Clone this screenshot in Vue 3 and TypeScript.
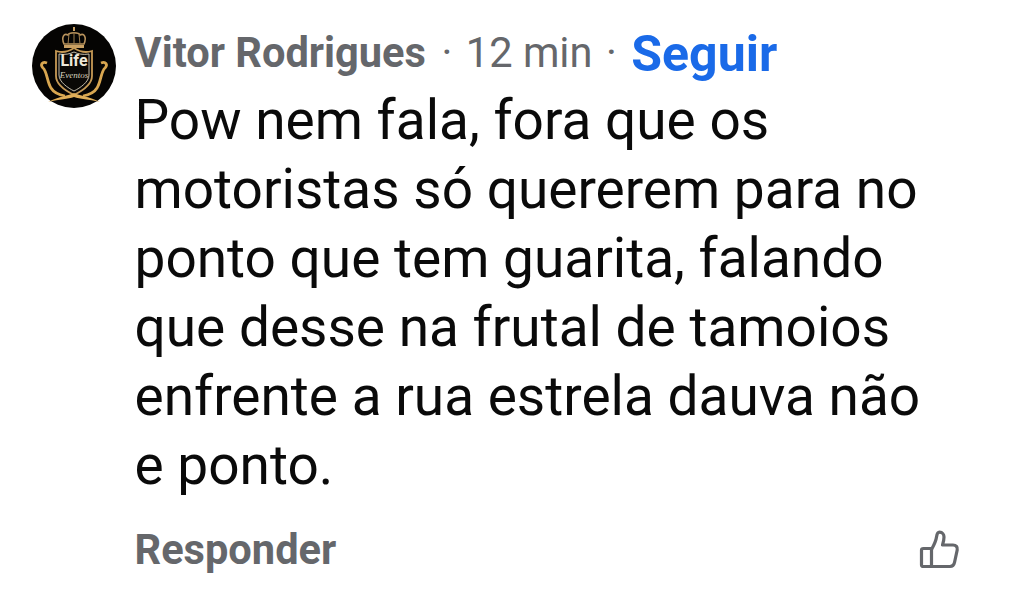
<script setup lang="ts">
const lines: string[] = [
  'Pow nem fala, fora que os',
  'motoristas só quererem para no',
  'ponto que tem guarita, falando',
  'que desse na frutal de tamoios',
  'enfrente a rua estrela dauva não',
  'e ponto.',
]
</script>

<template>
  <main class="comment">
    <div class="avatar">
      <svg viewBox="0 0 84 84" width="84" height="84">
        <circle cx="42" cy="42" r="42" fill="#050403" />
        <path d="M42 3v4" stroke="#c9a063" stroke-width="2" />
        <path d="M32 20 C29 13 32 9 36 11 C37 8 47 8 48 11 C52 9 55 13 52 20 Z" fill="none" stroke="#b8925c" stroke-width="1.6" />
        <path d="M42 8 V20 M37 10 L36 20 M47 10 L48 20" stroke="#9c7c4e" stroke-width="1" />
        <path d="M32 21 H52 V24 H32 Z" fill="#c9a063" />
        <path d="M24 27 C30 29 36 28 42 24 C48 28 54 29 60 27 L60 52 C60 60 50 67 42 71 C34 67 24 60 24 52 Z" fill="#0a0806" stroke="#c79a55" stroke-width="1.8" />
        <path d="M27 30 C33 31 38 30 42 28 C46 30 51 31 57 30 V51 C57 58 48 64 42 67 C36 64 27 58 27 51 Z" fill="none" stroke="#d8d0bc" stroke-width="0.9" />
        <path d="M15 39 C10 37 8 41 11 44 C15 47 15 58 19 64 C22 69 28 71 33 72 M69 39 C74 37 76 41 73 44 C69 47 69 58 65 64 C62 69 56 71 51 72" fill="none" stroke="#d8a650" stroke-width="2.8" />
        <path d="M16 78 C28 72 36 72 42 69 C48 72 56 72 68 78 C56 75 48 75 42 73 C36 75 28 75 16 78Z" fill="#e0ae58" />
      </svg>
      <span class="life">Life</span>
      <span class="eventos">Eventos</span>
    </div>
    <section class="body">
      <header class="meta">
        <strong class="name">Vitor Rodrigues</strong>
        <span class="dot first">·</span>
        <span class="time">12 min</span>
        <span class="dot second">·</span>
        <strong class="follow">Seguir</strong>
      </header>
      <p class="text">
        <span v-for="line in lines" :key="line" class="line">{{ line }}</span>
      </p>
      <footer class="actions">
        <strong class="reply">Responder</strong>
        <svg class="like" viewBox="0 0 42 42" width="42" height="42" fill="none" stroke="#65676b" stroke-width="3.2" stroke-linejoin="round" stroke-linecap="round">
          <path d="M3.5 21 C3.5 20 4.2 19.5 5.5 19.5 H13.5 V37.5 H5.5 C4.2 37.5 3.5 37 3.5 36 Z" />
          <path d="M13.5 20.5 C16 16 18 12 18.5 8 C19 4.5 20 3.2 21.5 3.2 C24.5 3.2 26 5.5 26 8 C26 11 25.5 13 24.5 16 H35 C38 16 39.8 18 39.2 21 L36.5 33.5 C36 36 34.5 37.5 32 37.5 H13.5" />
        </svg>
      </footer>
    </section>
  </main>
</template>

<style>
html, body { background: #fff; }
</style>

<style scoped>
.comment {
  width: 1024px;
  height: 601px;
  box-sizing: border-box;
  padding: 24px 64px 0 32px;
  display: flex;
  gap: 18.5px;
  font-family: Roboto, "Liberation Sans", sans-serif;
  background: #fff;
  overflow: hidden;
}
.avatar {
  position: relative;
  width: 84px;
  height: 84px;
  flex: none;
}
.avatar svg { display: block; }
.life {
  position: absolute;
  left: 0;
  right: 0;
  top: 28px;
  text-align: center;
  color: #efe9da;
  font-size: 16px;
  font-weight: 700;
  line-height: 18px;
}
.eventos {
  position: absolute;
  left: 0;
  right: 0;
  top: 46px;
  text-align: center;
  color: #d9d2bf;
  font-family: "Liberation Serif", serif;
  font-style: italic;
  font-size: 9px;
  line-height: 10px;
}
.body {
  flex: 1;
  min-width: 0;
  display: flex;
  flex-direction: column;
}
.meta {
  display: flex;
  align-items: flex-start;
  height: 62px;
  color: #65676b;
  white-space: nowrap;
}
.name { font-size: 41.6px; line-height: 48px; font-weight: 700; margin-top: 4.5px; }
.dot, .time { font-size: 41.6px; line-height: 48px; font-weight: 400; margin-top: 4.5px; }
.dot.first { margin-left: 15.5px; }
.time { margin-left: 13.5px; }
.dot.second { margin-left: 13.5px; }
.follow { font-size: 50px; line-height: 58px; font-weight: 700; color: #1a6ae8; margin-top: 0.5px; margin-left: 14.5px; }
.text {
  margin: 0;
  color: #0a0a0a;
  font-size: 55px;
  line-height: 69.1px;
}
.line { display: block; white-space: nowrap; }
.actions {
  margin-top: 28px;
  display: flex;
  justify-content: space-between;
  align-items: center;
  height: 42px;
}
.reply { font-size: 41.6px; font-weight: 700; color: #65676b; }
.like { display: block; }
</style>
